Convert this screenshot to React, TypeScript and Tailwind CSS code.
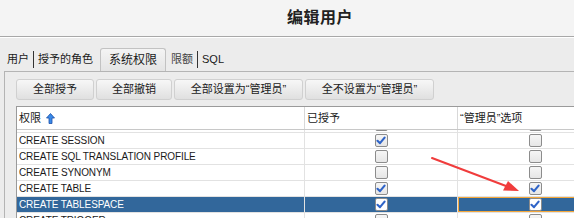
import React from "react";

const CJK = "font-['Liberation_Sans','Noto_Sans_CJK_SC',sans-serif]";

function Check({ checked, sel }: { checked: boolean; sel?: boolean }) {
  return (
    <div
      className={`w-[13px] h-[13px] border-[1.5px] border-[#8c8c8c] rounded-[2px] flex items-center justify-center ${
        sel ? "bg-white" : "bg-gradient-to-b from-[#f6f6f6] to-[#e6e6e6]"
      }`}
    >
      {checked && (
        <svg width="10" height="9" viewBox="0 0 10 9">
          <path d="M1.5 4.8 L4 7.2 L8.6 1.6" fill="none" stroke="#2f64c8" strokeWidth="2.1" strokeLinecap="round" strokeLinejoin="round" />
        </svg>
      )}
    </div>
  );
}

type Row = { name: string; g: boolean; a: boolean; sel?: boolean };

const rows: Row[] = [
  { name: "CREATE SEQUENCE", g: false, a: false },
  { name: "CREATE SESSION", g: true, a: false },
  { name: "CREATE SQL TRANSLATION PROFILE", g: false, a: false },
  { name: "CREATE SYNONYM", g: false, a: false },
  { name: "CREATE TABLE", g: true, a: true },
  { name: "CREATE TABLESPACE", g: true, a: true, sel: true },
  { name: "CREATE TRIGGER", g: false, a: false },
];

export default function App() {
  return (
    <div className={`relative w-[574px] h-[218px] overflow-hidden bg-[#ececec] ${CJK} text-[#1a1a1a]`}>
      {/* title */}
      <div className="h-[37px] bg-[#f4f4f4] border-b border-[#a8a8a8] flex items-center pl-[287px]">
        <span className="text-[16px] font-bold text-[#222] tracking-[0.5px]">编辑用户</span>
      </div>
      {/* tabs */}
      <div className="h-[34px] flex items-end pl-[7px] border-t border-white">
        <div className="flex items-center text-[11px] h-[23px]">
          <span>用户</span>
          <span className="w-px h-[17px] bg-[#333] mx-[4px]" />
          <span>授予的角色</span>
          <div className="ml-[7px] h-[23px] px-[8px] flex items-center border border-b-0 border-[#c2c2c2] rounded-t-[3px] bg-gradient-to-b from-[#f4f4f4] to-[#e4e4e4] text-[12px]">
            系统权限
          </div>
          <span className="ml-[5px] text-[#444]">限额</span>
          <span className="w-px h-[17px] bg-[#333] mx-[4px]" />
          <span className="text-[11px]">SQL</span>
        </div>
      </div>
      {/* panel */}
      <div className="ml-[4px] border-t border-l border-[#b4b4b4] h-[200px] pl-[11px] pt-[7px]">
        <div className="flex gap-[2px] text-[11px]">
          {["全部授予", "全部撤销", "全部设置为\u201C管理员\u201D", "全不设置为\u201C管理员\u201D"].map((t, i) => (
            <div
              key={t}
              className={`shrink-0 h-[21px] flex items-center justify-center border border-[#d0d0d0] rounded-[3px] bg-gradient-to-b from-[#f7f7f7] to-[#e0e0e0] ${
                ["w-[78px]", "w-[76px]", "w-[129px]", "w-[129px]"][i]
              }`}
            >
              {t}
            </div>
          ))}
        </div>
        <div className="mt-[6px] w-[620px] bg-white border-t border-l border-[#9a9a9a]">
          {/* header */}
          <div className="flex h-[23px] border-b border-[#c8c8c8] text-[11px]">
            <div className="shrink-0 w-[288px] flex items-center pl-[2px] border-r border-[#d8d8d8]">
              <span>权限</span>
              <svg className="ml-[5px]" width="9" height="11" viewBox="0 0 9 11">
                <path d="M4.5 0.5 L8.5 5 L6 5 L6 10.5 L3 10.5 L3 5 L0.5 5 Z" fill="#3a8ae8" stroke="#1c4fa8" strokeWidth="0.8" />
              </svg>
            </div>
            <div className="shrink-0 w-[153px] flex items-center pl-[2px] border-r border-[#d8d8d8]">已授予</div>
            <div className="flex-1 flex items-center pl-[2px]">{"\u201C管理员\u201D选项"}</div>
          </div>
          <div className="h-[90px] overflow-hidden">
            <div className="mt-[-13px]">
              {rows.map((r) => (
                <div
                  key={r.name}
                  className={`flex h-[16px] border-b border-[#e2e2e2] ${r.sel ? "bg-[#32679b] text-white" : ""}`}
                >
                  <div className="shrink-0 w-[288px] flex items-center pl-[2px] border-r border-[#e2e2e2] font-['Liberation_Sans',sans-serif] text-[10px] tracking-[-0.1px]">
                    {r.name}
                  </div>
                  <div className="shrink-0 w-[153px] flex items-center justify-center border-r border-[#e2e2e2]">
                    <Check checked={r.g} sel={r.sel} />
                  </div>
                  <div
                    className={`shrink-0 w-[154px] flex items-center justify-center ${
                      r.sel ? "border border-[#f3a73b]" : ""
                    }`}
                  >
                    <Check checked={r.a} sel={r.sel} />
                  </div>
                </div>
              ))}
            </div>
          </div>
        </div>
      </div>
      {/* red arrow annotation */}
      <svg className="absolute left-0 top-0 pointer-events-none" width="574" height="218">
        <line x1="432" y1="158" x2="506" y2="186" stroke="#f03c3c" strokeWidth="2" strokeLinecap="round" />
        <path d="M519 191 L503 190.5 L508 181 Z" fill="#f03c3c" />
      </svg>
    </div>
  );
}
